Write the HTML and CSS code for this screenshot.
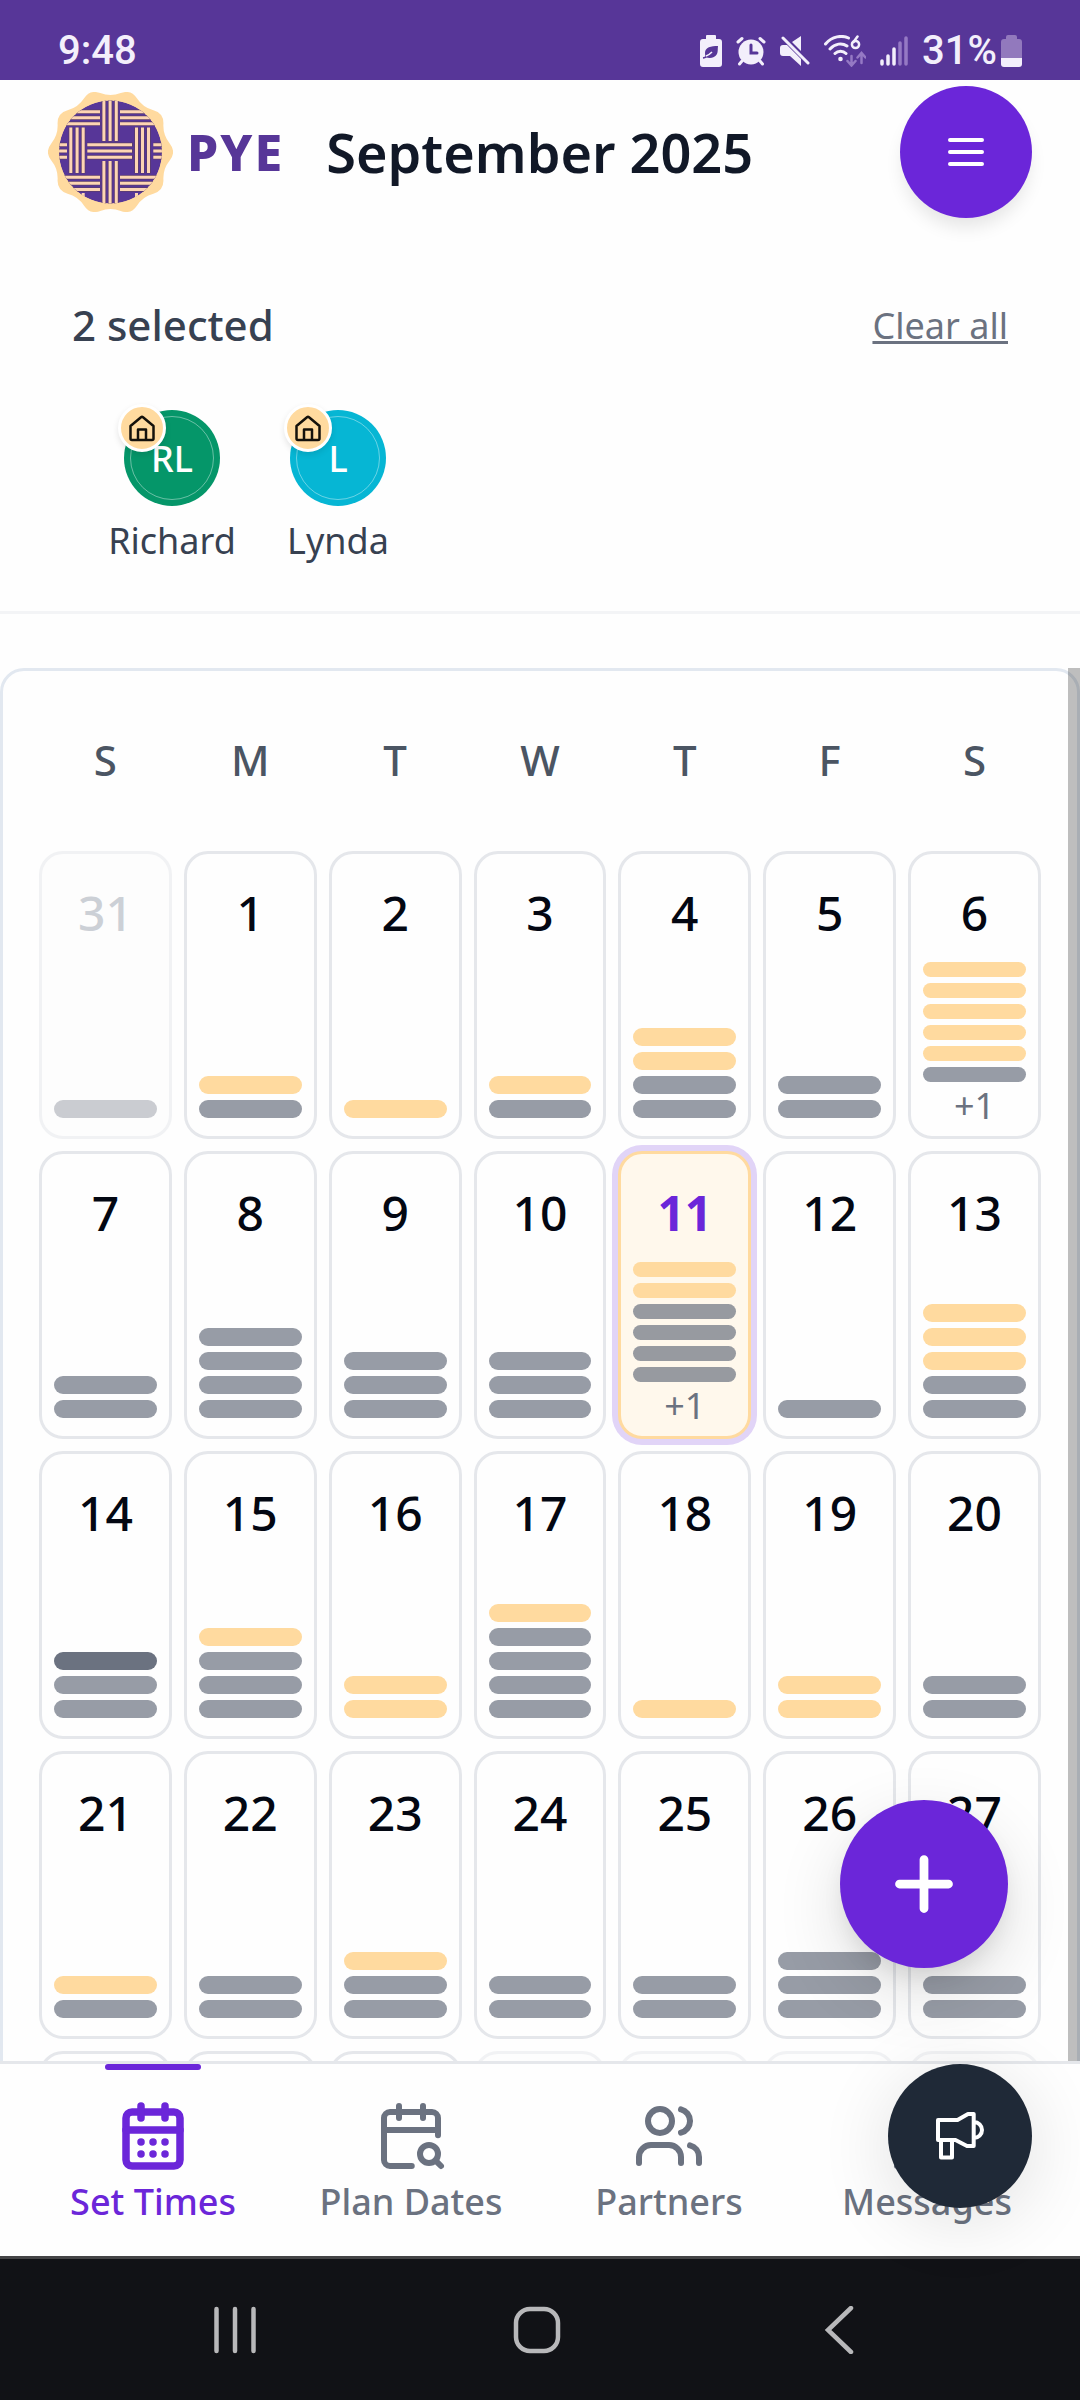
FILE: index.html
```html
<!DOCTYPE html>
<html lang="en">
<head>
    <meta charset="UTF-8">
    <meta name="viewport" content="width=device-width, initial-scale=1.0">
    <title>PYE - September 2025</title>
    <link rel="stylesheet" href="styles.css">
</head>
<body>
    <div class="status-bar">
        <span class="clock">9:48</span>
        <div class="status-icons">
            <svg width="22" height="32" viewBox="0 0 22 32" fill="#f3effb">
                <path d="M7 0h8a1 1 0 0 1 1 1v3h3a3 3 0 0 1 3 3v22a3 3 0 0 1-3 3H3a3 3 0 0 1-3-3V7a3 3 0 0 1 3-3h3V1a1 1 0 0 1 1-1z"/>
                <path d="M18 11c-7 0-13 1-13 7 0 2 .4 3 1 4 3 2 9 1 11-3 1-2 .6-5 1-8z" fill="#573698"/>
                <path d="M3 23c4-.5 6-3 9-6" fill="none" stroke="#573698" stroke-width="1.6"/>
                <path d="M6 21c2-.5 4-2 6-4" fill="none" stroke="#f3effb" stroke-width="1.6"/>
            </svg>
            <svg width="30" height="32" viewBox="0 0 30 32" fill="none" stroke="#f3effb" stroke-width="3" stroke-linecap="round">
                <circle cx="15" cy="17" r="12.5" fill="#f3effb" stroke="none"/>
                <path d="M2 7l4-3.500M28 7l-4-3.500M6 26l-2.500 3M24 26l2.500 3"/>
                <path d="M15 10v8h6" stroke="#573698"/>
            </svg>
            <svg width="30" height="32" viewBox="0 0 30 32" fill="#f3effb">
                <path d="M0 13a3 3 0 0 1 3-3h4l14 14v7L10 21H3a3 3 0 0 1-3-3zM12 7l9-6v15z"/>
                <path d="M3 3l25 25" stroke="#f3effb" stroke-width="3" stroke-linecap="round"/>
            </svg>
            <svg width="42" height="32" viewBox="0 0 42 32" fill="none" stroke="#f3effb" stroke-width="3" stroke-linecap="round">
                <path d="M1.500 9C8 1 18 0 24.500 3M6 14c5-5.500 12-6.500 17-3M11 18.500c3-3 8-3 11 0"/>
                <circle cx="16.500" cy="24" r="2.300" fill="#f3effb" stroke="none"/>
                <path d="M33.500 1.500l-4 5.500" stroke-width="2.500"/>
                <circle cx="31.500" cy="9.500" r="3.600" stroke-width="2.500"/>
                <path d="M27.500 21v9m-4-4l4 4.500 4-4.500M37.500 28v-9.500m-4 4l4-4.500 4 4.500" stroke="#9579c4" stroke-width="2.500"/>
            </svg>
            <svg width="28" height="30" viewBox="0 0 28 30" fill="none" stroke="#f3effb" stroke-width="3.500" stroke-linecap="round">
                <path d="M2 25v3M8 20v8M14 13v15"/>
                <path d="M20 7v21M26 2v26" stroke="#9579c4"/>
            </svg>
            <div class="battery">
                <span>31%</span>
                <svg width="21" height="32" viewBox="0 0 21 32">
                    <path d="M7 0h7a2 2 0 0 1 2 2v2h2a3 3 0 0 1 3 3v16H0V7a3 3 0 0 1 3-3h2V2a2 2 0 0 1 2-2z" fill="#9279bd"/>
                    <path d="M0 23h21v6a3 3 0 0 1-3 3H3a3 3 0 0 1-3-3z" fill="#f3effb"/>
                </svg>
            </div>
        </div>
    </div>

    <header class="header">
        <a class="brand" href="#">
            <svg width="125" height="120" viewBox="-62.500 -60 125 120">
                <path fill="#ffda9f" d="M59.200-8.500Q66 0 59.200 8.500Q52.300 17 52.900 27.900Q53.400 38.800 42.900 41.700Q32.300 44.500 26.400 53.700Q20.400 62.800 10.200 58.900Q0 55-10.200 58.900Q-20.400 62.800-26.400 53.700Q-32.300 44.500-42.900 41.700Q-53.400 38.800-52.900 27.900Q-52.300 17-59.200 8.500Q-66 0-59.200-8.500Q-52.300-17-52.900-27.900Q-53.400-38.800-42.900-41.700Q-32.300-44.500-26.400-53.700Q-20.400-62.800-10.200-58.900Q0-55 10.200-58.900Q20.400-62.800 26.400-53.700Q32.300-44.500 42.900-41.700Q53.400-38.800 52.900-27.900Q52.300-17 59.200-8.500z"/>
                <clipPath id="disc"><circle r="51.500"/></clipPath>
                <g clip-path="url(#disc)">
                    <circle r="51.500" fill="#573698"/>
                    <g stroke="#5b3d6c" stroke-width="4.600">
                        <path d="M-6.600-52v41.500M-.4-52v41.500M5.800-52v41.500M-6.600 9v43M-.4 9v43M5.800 9v43"/>
                        <path d="M-52-40.200h42M-52-34.200h42M-52-28.200h42M10-40.200h42M10-34.200h42M10-28.200h42"/>
                        <path d="M-52 25.200h42M-52 31.200h42M-52 37.500h42M10 25.200h42M10 31.200h42M10 37.500h42"/>
                        <path d="M-39.700-24.500v46M-33.400-24.500v46M-27.300-24.500v46M26-24.500v46M32-24.500v46M38-24.500v46"/>
                        <path d="M-23.500-7.300h46M-23.500-1h46M-23.500 5.200h46M-52-7.300h8M-52-1h8M-52 5.200h8M43-7.300h9M43-1h9M43 5.200h9"/>
                    </g>
                    <g stroke="#fdd5b3" stroke-width="3">
                        <path d="M-6.600-52v41M-.4-52v41M5.800-52v41M-6.600 9v43M-.4 9v43M5.800 9v43"/>
                        <path d="M-52-40.200h41.500M-52-34.200h41.500M-52-28.200h41.500M9.500-40.200h42M9.500-34.200h42M9.500-28.200h42"/>
                        <path d="M-52 25.200h41.500M-52 31.200h41.500M-52 37.500h41.500M9.500 25.200h42M9.500 31.200h42M9.500 37.500h42"/>
                        <path d="M-39.700-24.500v45.500M-33.400-24.500v45.500M-27.300-24.500v45.500M26-24.500v45.500M32-24.500v45.500M38-24.500v45.500M-27.300 41v8M26 41v8"/>
                        <path d="M-23.200-7.300h44.700M-23.200-1h44.700M-23.200 5.200h44.700M-52-7.300h8.500M-52-1h8.500M-52 5.200h8.500M42.800-7.300h9M42.800-1h9M42.800 5.200h9"/>
                    </g>
                </g>
            </svg>
            <span class="brand-name">PYE</span>
        </a>
        <h1>September 2025</h1>
        <button class="menu-btn" aria-label="Menu">
            <svg width="48" height="48" viewBox="0 0 24 24" class="icon"><path d="M4 6h16M4 12h16M4 18h16"/></svg>
        </button>
    </header>

    <section class="selection">
        <div class="selection-head">
            <span class="selection-count">2 selected</span>
            <button class="clear-btn">Clear all</button>
        </div>
        <div class="people">
            <div class="person">
                <div class="avatar green">
                    <span class="initials">RL</span>
                    <span class="home-badge">
                        <svg width="28" height="28" viewBox="0 0 28 28"><path d="M2.500 12 13 3.200q1-.8 2 0L25.500 12v12.500a1.500 1.500 0 0 1-1.500 1.500H4a1.500 1.500 0 0 1-1.500-1.500zM10 26V15.500h8V26"/></svg>
                    </span>
                </div>
                <span class="person-name">Richard</span>
            </div>
            <div class="person">
                <div class="avatar cyan">
                    <span class="initials">L</span>
                    <span class="home-badge">
                        <svg width="28" height="28" viewBox="0 0 28 28"><path d="M2.500 12 13 3.200q1-.8 2 0L25.500 12v12.500a1.500 1.500 0 0 1-1.500 1.500H4a1.500 1.500 0 0 1-1.500-1.500zM10 26V15.500h8V26"/></svg>
                    </span>
                </div>
                <span class="person-name">Lynda</span>
            </div>
        </div>
    </section>

    <main class="calendar-scroll">
        <div class="calendar">
            <div class="weekdays">
                <span>S</span><span>M</span><span>T</span><span>W</span><span>T</span><span>F</span><span>S</span>
            </div>
            <div class="days" id="days"></div>
        </div>
        <div class="scroll-thumb"></div>
    </main>

    <nav class="tab-bar">
        <a class="tab active" href="#">
            <svg width="72" height="72" viewBox="0 0 24 24" class="icon"><rect x="3" y="4" width="18" height="18" rx="2"/><path d="M8 2v4M16 2v4M3 10h18M8 14h.01M12 14h.01M16 14h.01M8 18h.01M12 18h.01M16 18h.01"/></svg>
            <span>Set Times</span>
        </a>
        <a class="tab" href="#">
            <svg width="72" height="72" viewBox="0 0 24 24" class="icon"><path d="M16 2v4M8 2v4M3 10h18M21 11.750V6a2 2 0 0 0-2-2H5a2 2 0 0 0-2 2v14a2 2 0 0 0 2 2h7.250M22 22l-1.875-1.875"/><circle cx="18" cy="18" r="3"/></svg>
            <span>Plan Dates</span>
        </a>
        <a class="tab" href="#">
            <svg width="72" height="72" viewBox="0 0 24 24" class="icon"><path d="M16 21v-2a4 4 0 0 0-4-4H6a4 4 0 0 0-4 4v2M22 21v-2a4 4 0 0 0-3-3.870M16 3.130a4 4 0 0 1 0 7.750"/><circle cx="9" cy="7" r="4"/></svg>
            <span>Partners</span>
        </a>
        <a class="tab" href="#">
            <svg width="72" height="72" viewBox="0 0 24 24" class="icon"><path d="M7.900 20A9 9 0 1 0 4 16.100L2 22z"/></svg>
            <span>Messages</span>
        </a>
        <button class="feedback-btn" aria-label="Send feedback">
            <svg width="48" height="48" viewBox="0 0 48 48"><path d="M2 8h19.500L32 2h5.700v32H31l-11.500-6H2zM5 28v17.600h11V28M38 10a8 8 0 0 1 0 16"/></svg>
        </button>
    </nav>

    <button class="add-btn" aria-label="Add time">
        <svg width="84" height="84" viewBox="0 0 24 24" class="icon"><path d="M5 12h14M12 5v14"/></svg>
    </button>

    <div class="system-nav">
        <button aria-label="Recents"><svg width="48" height="48" viewBox="0 0 48 48"><path d="M5.500 3v42M24 3v42M42.500 3v42"/></svg></button>
        <button aria-label="Home"><svg width="48" height="48" viewBox="0 0 48 48"><rect x="3" y="3" width="42" height="42" rx="14"/></svg></button>
        <button aria-label="Back"><svg width="48" height="48" viewBox="0 0 48 48"><path d="M36 2 13 24l23 22"/></svg></button>
    </div>

    <script>
        // bars from top to bottom: y = home, g = busy, d = busy all day
        const days = [
            { day: 31, bars: 'g', other: true },
            { day: 1, bars: 'yg' },
            { day: 2, bars: 'y' },
            { day: 3, bars: 'yg' },
            { day: 4, bars: 'yygg' },
            { day: 5, bars: 'gg' },
            { day: 6, bars: 'yyyyyg', more: 1 },
            { day: 7, bars: 'gg' },
            { day: 8, bars: 'gggg' },
            { day: 9, bars: 'ggg' },
            { day: 10, bars: 'ggg' },
            { day: 11, bars: 'yygggg', more: 1, today: true },
            { day: 12, bars: 'g' },
            { day: 13, bars: 'yyygg' },
            { day: 14, bars: 'dgg' },
            { day: 15, bars: 'yggg' },
            { day: 16, bars: 'yy' },
            { day: 17, bars: 'ygggg' },
            { day: 18, bars: 'y' },
            { day: 19, bars: 'yy' },
            { day: 20, bars: 'gg' },
            { day: 21, bars: 'yg' },
            { day: 22, bars: 'gg' },
            { day: 23, bars: 'ygg' },
            { day: 24, bars: 'gg' },
            { day: 25, bars: 'gg' },
            { day: 26, bars: 'ggg' },
            { day: 27, bars: 'gg' },
            { day: 28, bars: '' },
            { day: 29, bars: '' },
            { day: 30, bars: '' },
            { day: 1, bars: '', other: true },
            { day: 2, bars: '', other: true },
            { day: 3, bars: '', other: true },
            { day: 4, bars: '', other: true }
        ];
        const barClasses = { y: 'home', g: 'busy', d: 'all-day' };
        const grid = document.getElementById('days');

        days.forEach(({ day, bars, more, other, today }) => {
            const cell = document.createElement('button');
            cell.className = 'day';
            if (other) cell.classList.add('other-month');
            if (today) cell.classList.add('today');
            if (more) cell.classList.add('full');

            const barHtml = [...bars].map(b => `<span class="bar ${barClasses[b]}"></span>`).join('');
            const moreHtml = more ? `<span class="more">+${more}</span>` : '';
            cell.innerHTML = `<span class="day-number">${day}</span><span class="bars">${barHtml}${moreHtml}</span>`;
            grid.appendChild(cell);
        });
    </script>
</body>
</html>
```
FILE: styles.css
```css
:root {
    --brand: #573698;
    --primary: #6b26d9;
    --peach: #ffda9f;
    --gray-200: #e5e7eb;
    --gray-500: #6b7280;
    --gray-600: #4b5563;
    --gray-700: #374151;
    --gray-900: #111827;
}

* {
    box-sizing: border-box;
}

body {
    margin: 0;
    height: 100vh;
    display: flex;
    flex-direction: column;
    position: relative;
    overflow: hidden;
    background-color: #fefefe;
    font-family: 'Noto Sans', 'Open Sans', sans-serif;
    color: var(--gray-700);
}

button {
    padding: 0;
    border: none;
    background: none;
    font-family: inherit;
    color: inherit;
    cursor: pointer;
}

a {
    color: inherit;
    text-decoration: none;
}

svg {
    display: block;
    flex-shrink: 0;
}

.icon {
    fill: none;
    stroke: currentColor;
    stroke-width: 2;
    stroke-linecap: round;
    stroke-linejoin: round;
}

/* Phone status bar */
.status-bar {
    display: flex;
    align-items: center;
    justify-content: space-between;
    height: 80px;
    padding: 22px 58px 0;
    background-color: var(--brand);
    color: #f3effb;
    font-family: Roboto, sans-serif;
    font-size: 40px;
    font-weight: 500;
    line-height: 48px;
}

.status-icons {
    display: flex;
    align-items: center;
    gap: 14px;
}

.battery {
    display: flex;
    align-items: center;
    gap: 4px;
}

/* Header */
.header {
    display: flex;
    align-items: center;
    height: 144px;
    padding: 0 48px;
}

.brand {
    display: flex;
    align-items: center;
    gap: 14px;
}

.brand-name {
    color: var(--brand);
    font-size: 50px;
    font-weight: 800;
    letter-spacing: 2px;
    line-height: 72px;
}

h1 {
    margin: 0 0 0 42px;
    color: var(--gray-900);
    font-size: 54px;
    font-weight: 600;
    line-height: 72px;
}

.menu-btn {
    display: grid;
    place-items: center;
    width: 132px;
    height: 132px;
    margin-left: auto;
    border-radius: 50%;
    background-color: var(--primary);
    color: white;
    box-shadow: 0 12px 18px -3px rgba(0, 0, 0, 0.1);
}

/* Selected people */
.selection {
    padding: 71px 72px 46px;
    border-bottom: 3px solid #f3f4f6;
}

.selection-head {
    display: flex;
    align-items: center;
    justify-content: space-between;
    margin-bottom: 55px;
    line-height: 60px;
}

.selection-count {
    font-size: 42px;
    font-weight: 500;
}

.clear-btn {
    color: var(--gray-500);
    font-size: 36px;
    text-decoration: underline;
}

.people {
    display: flex;
    gap: 30px;
    padding-left: 32px;
}

.person {
    display: flex;
    flex-direction: column;
    align-items: center;
    gap: 11px;
    width: 136px;
}

.avatar {
    position: relative;
    display: grid;
    width: 96px;
    height: 96px;
    padding: 6px;
    border-radius: 50%;
}

.avatar.green {
    background-color: #059669;
}

.avatar.cyan {
    background-color: #06b6d4;
}

.initials {
    display: grid;
    place-items: center;
    border: 1px solid rgba(255, 255, 255, 0.4);
    border-radius: 50%;
    color: white;
    font-size: 36px;
    font-weight: 500;
}

.home-badge {
    position: absolute;
    top: -6px;
    left: -6px;
    display: grid;
    place-items: center;
    width: 48px;
    height: 48px;
    border: 3px solid white;
    border-radius: 50%;
    background-color: var(--peach);
    box-shadow: 0 3px 6px rgba(0, 0, 0, 0.1);
}

.home-badge svg {
    fill: none;
    stroke: #14110b;
    stroke-width: 2.5;
    stroke-linejoin: round;
}

.person-name {
    font-size: 36px;
    line-height: 48px;
}

/* Calendar */
.calendar-scroll {
    position: relative;
    flex: 1;
    min-height: 0;
    margin-top: 54px;
    overflow: hidden;
}

.calendar {
    padding: 59px 36px;
    border: 3px solid #e2e8f0;
    border-radius: 24px;
}

.scroll-thumb {
    position: absolute;
    top: 0;
    right: 0;
    bottom: 0;
    width: 12px;
    background-color: rgba(0, 0, 0, 0.25);
}

.weekdays,
.days {
    display: grid;
    grid-template-columns: repeat(7, 1fr);
    gap: 12px;
}

.weekdays {
    margin-bottom: 61px;
    color: var(--gray-600);
    font-size: 42px;
    font-weight: 500;
    line-height: 60px;
    text-align: center;
}

.day {
    display: flex;
    flex-direction: column;
    justify-content: space-between;
    height: 288px;
    padding: 24px 12px 18px;
    border: 3px solid var(--gray-200);
    border-radius: 24px;
    color: #030712;
}

.day-number {
    font-size: 48px;
    font-weight: 500;
    line-height: 70px;
    text-align: center;
}

.bars {
    display: flex;
    flex-direction: column;
    gap: 6px;
}

.bar {
    height: 18px;
    border-radius: 9px;
}

.bar.home {
    background-color: var(--peach);
}

.bar.busy {
    background-color: rgba(107, 114, 128, 0.7);
}

.bar.all-day {
    background-color: var(--gray-500);
}

.more {
    color: var(--gray-500);
    font-size: 36px;
    line-height: 36px;
    text-align: center;
}

.day.full {
    padding-bottom: 12px;
}

.day.full .bar {
    height: 15px;
}

.day.other-month {
    background-color: #fdfdfd;
    color: #9ca3af;
    opacity: 0.5;
}

.day.today {
    border-color: var(--peach);
    background-color: #fff8ec;
    box-shadow: 0 0 0 6px #e1d4f7;
}

.day.today .day-number {
    color: var(--primary);
    font-weight: 700;
}

/* Bottom tabs */
.tab-bar {
    position: relative;
    display: grid;
    grid-template-columns: repeat(4, 1fr);
    padding: 0 24px;
    border-top: 3px solid var(--gray-200);
}

.tab {
    position: relative;
    display: flex;
    flex-direction: column;
    align-items: center;
    gap: 6px;
    padding: 36px 0 30px;
    color: var(--gray-500);
    font-size: 36px;
    font-weight: 500;
    line-height: 48px;
}

.tab.active {
    color: var(--primary);
}

.tab.active .icon {
    stroke-width: 2.5;
}

.tab.active::before {
    content: "";
    position: absolute;
    top: 0;
    width: 96px;
    height: 6px;
    border-radius: 3px;
    background-color: var(--primary);
}

.feedback-btn {
    position: absolute;
    top: 0;
    right: 48px;
    display: grid;
    place-items: center;
    width: 144px;
    height: 144px;
    border-radius: 50%;
    background-color: #1f2937;
    box-shadow: 0 12px 72px rgba(0, 0, 0, 0.12);
}

.feedback-btn svg {
    fill: none;
    stroke: white;
    stroke-width: 4;
    stroke-linejoin: round;
}

.add-btn {
    position: absolute;
    right: 72px;
    bottom: 432px;
    display: grid;
    place-items: center;
    width: 168px;
    height: 168px;
    border-radius: 50%;
    background-color: var(--primary);
    color: white;
    box-shadow: 0 24px 72px -6px rgba(0, 0, 0, 0.16), 0 12px 24px -6px rgba(0, 0, 0, 0.1);
}

.add-btn .icon {
    stroke-width: 2.5;
}

/* Phone navigation buttons */
.system-nav {
    display: flex;
    align-items: center;
    justify-content: center;
    gap: 254px;
    height: 144px;
    padding-right: 6px;
    border-top: 3px solid #444446;
    background-color: #111216;
}

.system-nav svg {
    fill: none;
    stroke: #b8b8ba;
    stroke-width: 4.5;
    stroke-linecap: round;
}
```
